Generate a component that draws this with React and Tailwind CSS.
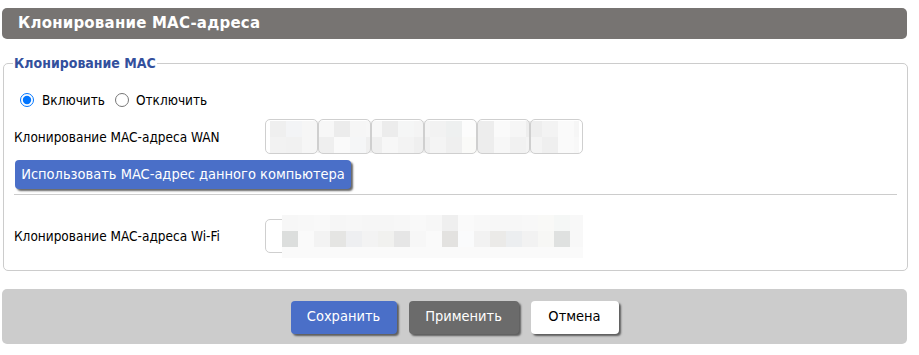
import React from "react";

const font = { fontFamily: '"DejaVu Sans Condensed", "DejaVu Sans", sans-serif' };

const wanTop = ["bg-[#efefef]","bg-[#f3f4f6]","bg-[#f6f6f6]","bg-[#f7f7f7]","bg-[#ececec]","bg-[#f6f6f6]","bg-[#f7f7f7]","bg-[#ececec]","bg-[#f5f6f6]","bg-[#f4f4f4]","bg-[#f2f2f2]","bg-[#eef0f0]","bg-[#fcfcfc]","bg-[#ededed]","bg-[#fafafa]","bg-[#f6f6f6]","bg-[#eeeeee]","bg-[#f3f3f3]","bg-[#fafafa]","bg-[#f6f6f6]"];
const wanBot = ["bg-[#f2f2f2]","bg-[#f1f1f1]","bg-[#f6f6f6]","bg-[#efefef]","bg-[#fafafa]","bg-[#f5f6f7]","bg-[#efefef]","bg-[#f7f7f7]","bg-[#f3f3f3]","bg-[#efefef]","bg-[#f4f4f4]","bg-[#efefef]","bg-[#fafaf8]","bg-[#ededed]","bg-[#f7f7f7]","bg-[#f1f1f1]","bg-[#f4f4f4]","bg-[#efefef]","bg-[#fafafa]","bg-[#f8f8f8]"];

const wifiTop = ["bg-[#f7f7f7]","bg-[#f8f8f8]","bg-[#f9f9f9]","bg-[#f6f6f6]","bg-[#f7f7f7]","bg-[#f6f6f6]","bg-[#f6f6f6]","bg-[#f7f7f7]","bg-[#f9f9f9]","bg-[#f7f7f7]","bg-[#efefef]","bg-[#fafafa]","bg-[#f8f8f8]","bg-[#f7f7f7]","bg-[#f7f7f7]","bg-[#f8f8f8]","bg-[#f9f9f7]","bg-[#f5f7f6]","bg-[#f8f8f8]"];
const wifiMid = ["bg-[#dcdedd]","bg-[#fafafa]","bg-[#f3f3f3]","bg-[#e5e5e3]","bg-[#eeeff1]","bg-[#f3f3f3]","bg-[#f1f1ef]","bg-[#e6e6e6]","bg-[#f7f7f7]","bg-[#fafafa]","bg-[#e3e2e0]","bg-[#fafbfc]","bg-[#f2f2f2]","bg-[#ebeae8]","bg-[#eceef0]","bg-[#f2f2f2]","bg-[#f7f7f5]","bg-[#dfe1e0]","bg-[#f8f8f8]"];

function Row({ cells, h }) {
  return (
    <div className={`flex ${h}`}>
      {cells.map((c, i) => (
        <div key={i} className={`w-[16px] shrink-0 ${c}`} />
      ))}
    </div>
  );
}

function WanField() {
  return (
    <div className="relative w-[318px] h-[35px]">
      <div className="absolute left-[5px] top-[2px] w-[309px] h-[32px] overflow-hidden">
        <Row cells={wanTop} h="h-[16px]" />
        <Row cells={wanBot} h="h-[16px]" />
      </div>
      <div className="absolute inset-0 flex">
        {[0, 1, 2, 3, 4, 5].map((i) => (
          <div key={i} className="w-[53px] h-[35px] border border-[#cfcfcf] rounded-[5px]" />
        ))}
      </div>
    </div>
  );
}

function WifiField() {
  return (
    <div className="relative w-[318px] h-[34px]">
      <div className="absolute inset-0 border border-[#cfcfcf] rounded-[5px] bg-white" />
      <div className="absolute left-[17px] top-[-4px] w-[301px] h-[43px] overflow-hidden bg-[#fafafa]">
        <Row cells={wifiTop} h="h-[16px]" />
        <Row cells={wifiMid} h="h-[16px]" />
      </div>
    </div>
  );
}

export default function App() {
  return (
    <div className="w-[919px] h-[355px] bg-white px-[2px] pt-[8px] text-[13.5px] text-black" style={font}>
      <div className="w-[905px] h-[31px] bg-[#777472] rounded-[5px] flex items-center pl-[16px]">
        <span className="text-white font-bold text-[15px] tracking-[0.2px]" style={{ fontFamily: '"DejaVu Sans", sans-serif' }}>
          Клонирование MAC-адреса
        </span>
      </div>

      <fieldset className="mt-[16px] ml-[1px] w-[904px] h-[216px] border border-[#cccccc] rounded-[5px] px-[10px] pb-[10px]">
        <legend className="px-[1px] ml-[-1px] text-[#33509d] font-bold text-[14px] leading-[16px]">
          Клонирование MAC
        </legend>

        <div className="flex items-center h-[22px] mt-[18px] pl-[6px]">
          <input type="radio" name="m" defaultChecked className="m-0 w-[14px] h-[14px]" />
          <span className="ml-[8px]">Включить</span>
          <input type="radio" name="m" className="m-0 ml-[10px] w-[14px] h-[14px]" />
          <span className="ml-[7px]">Отключить</span>
        </div>

        <div className="flex items-center mt-[8px]">
          <div className="w-[251px] pt-[1px]">Клонирование MAC-адреса WAN</div>
          <WanField />
        </div>

        <div className="mt-[6px] pl-[1px]">
          <button className="h-[29px] w-[336px] bg-[#4a6fc8] text-white text-[14.5px] rounded-[4px] shadow-[2px_2px_2px_rgba(0,0,0,0.6)] flex items-center justify-center">
            Использовать MAC-адрес данного компьютера
          </button>
        </div>

        <div className="mt-[5px] border-t border-[#cccccc] w-[883px]" />

        <div className="flex items-center mt-[24px]">
          <div className="w-[251px] pt-[1px]">Клонирование MAC-адреса Wi-Fi</div>
          <WifiField />
        </div>
      </fieldset>

      <div className="mt-[18px] w-[905px] h-[55px] bg-[#cccccc] rounded-[5px] flex items-center justify-center gap-[12px] pt-[1px]">
        <button className="w-[106px] h-[33px] bg-[#4a6fc8] text-white text-[14.5px] rounded-[4px] shadow-[2px_2px_2px_rgba(0,0,0,0.55)]">
          Сохранить
        </button>
        <button className="w-[110px] h-[33px] bg-[#6b6b6b] text-white text-[14.5px] rounded-[4px] shadow-[2px_2px_2px_rgba(0,0,0,0.55)]">
          Применить
        </button>
        <button className="w-[88px] h-[33px] bg-white text-black text-[14.5px] rounded-[4px] shadow-[2px_2px_2px_rgba(0,0,0,0.55)]">
          Отмена
        </button>
      </div>
    </div>
  );
}
